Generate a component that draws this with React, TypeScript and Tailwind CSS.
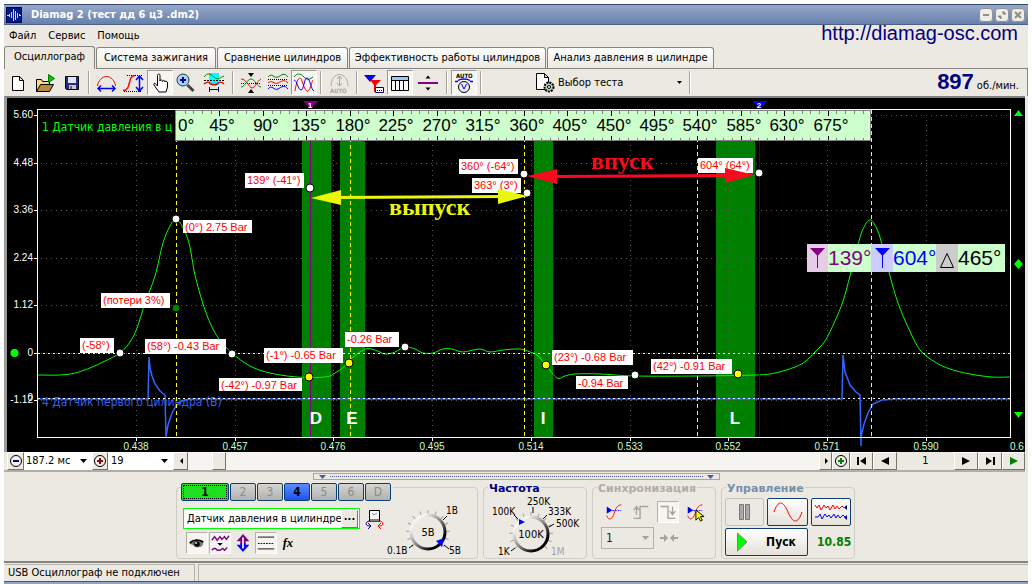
import type { ReactNode } from "react";

const channels = ["2", "3", "4", "5", "6", "D"];
const tabs = [
  { label: "Система зажигания", width: "w-[120px]" },
  { label: "Сравнение цилиндров", width: "w-[131px]" },
  { label: "Эффективность работы цилиндров", width: "w-[197px]" },
  { label: "Анализ давления в цилиндре", width: "w-[167px]" },
];

// Chart geometry
const gridY = [
  { y: 115, label: "5.60" },
  { y: 163, label: "4.48" },
  { y: 210, label: "3.36" },
  { y: 258, label: "2.24" },
  { y: 305, label: "1.12" },
  { y: 353, label: "0" },
  { y: 400, label: "-1.12" },
];
const gridX = [
  { x: 136, label: "0.438" },
  { x: 235, label: "0.457" },
  { x: 333, label: "0.476" },
  { x: 432, label: "0.495" },
  { x: 531, label: "0.514" },
  { x: 630, label: "0.533" },
  { x: 728, label: "0.552" },
  { x: 827, label: "0.571" },
  { x: 926, label: "0.590" },
];
const bands = [
  { x: 302, width: 29, label: "D", labelX: 316 },
  { x: 340, width: 25, label: "E", labelX: 352 },
  { x: 534, width: 19, label: "I", labelX: 543 },
  { x: 716, width: 39, label: "L", labelX: 735 },
];
const notes = [
  { x: 245, y: 173, w: 59, h: 15, text: "139° (-41°)" },
  { x: 459, y: 159, w: 59, h: 15, text: "360° (-64°)" },
  { x: 472, y: 178, w: 49, h: 15, text: "363° (3°)" },
  { x: 698, y: 158, w: 55, h: 15, text: "604° (64°)" },
  { x: 183, y: 220, w: 69, h: 13, text: "(0°) 2.75 Bar" },
  { x: 101, y: 293, w: 69, h: 15, text: "(потери 3%)" },
  { x: 80, y: 338, w: 34, h: 15, text: "(-58°)" },
  { x: 145, y: 339, w: 81, h: 15, text: "(58°) -0.43 Bar" },
  { x: 264, y: 348, w: 79, h: 15, text: "(-1°) -0.65 Bar" },
  { x: 219, y: 378, w: 83, h: 13, text: "(-42°) -0.97 Bar" },
  { x: 345, y: 332, w: 54, h: 15, text: "-0.26 Bar" },
  { x: 552, y: 350, w: 81, h: 15, text: "(23°) -0.68 Bar" },
  { x: 576, y: 376, w: 52, h: 13, text: "-0.94 Bar" },
  { x: 651, y: 359, w: 81, h: 15, text: "(42°) -0.91 Bar" },
];
const dots = [
  { x: 176, y: 219, fill: "#fff" },
  { x: 310, y: 188, fill: "#fff" },
  { x: 524, y: 174, fill: "#fff" },
  { x: 527, y: 193, fill: "#fff" },
  { x: 759, y: 173, fill: "#fff" },
  { x: 120, y: 353, fill: "#fff" },
  { x: 232, y: 354, fill: "#fff" },
  { x: 405, y: 347, fill: "#fff" },
  { x: 635, y: 375, fill: "#fff" },
  { x: 176, y: 308, fill: "#008000" },
  { x: 309, y: 377, fill: "#ff0" },
  { x: 349, y: 363, fill: "#ff0" },
  { x: 546, y: 365, fill: "#ff0" },
  { x: 738, y: 374, fill: "#ff0" },
];
const pressure =
  "38,375 60,375 75,373 90,368 105,361 120,353 130,342 137,328 145,303 155,276 163,243 170,226 176,219 182,226 189,243 195,275 203,304 211,325 219,339 232,353 250,366 270,373 297,377 325,377 335,373 345,366 352,358 365,349 375,350 385,354 395,352 405,347 415,349 423,353 433,353 443,349 452,349 463,352 479,349 490,352 503,350 520,349 530,352 537,355 546,365 557,378 565,376 575,374 600,374 635,376 697,376 756,375 775,373 795,367 806,361 815,352 825,341 835,321 843,301 850,276 857,248 863,229 870,220 877,229 883,248 890,276 898,303 908,327 920,350 935,362 950,369 970,374 992,377 1010,377";
const ignition =
  "38,399 148,399 149,357 150,368 152,376 155,384 160,391 165,395 166,437 168,425 172,413 176,406 182,401 190,399 842,399 843,355 845,372 850,385 856,392 860,395 861,446 861,437 864,424 868,413 873,404 882,400 895,399 1010,399";

// Catmull-Rom spline through a point list
function smoothPath(points: string) {
  const p = points.split(" ").map((pair) => pair.split(",").map(Number));
  let d = `M${p[0][0]} ${p[0][1]}`;
  for (let i = 0; i < p.length - 1; i++) {
    const a = p[i - 1] ?? p[i];
    const b = p[i];
    const c = p[i + 1];
    const e = p[i + 2] ?? c;
    d += `C${b[0] + (c[0] - a[0]) / 6} ${b[1] + (c[1] - a[1]) / 6} ${c[0] - (e[0] - b[0]) / 6} ${c[1] - (e[1] - b[1]) / 6} ${c[0]} ${c[1]}`;
  }
  return d;
}

export default function App() {
  return (
    <div className="min-h-screen bg-white px-1 pt-1 font-['DejaVu_Sans_Condensed','DejaVu_Sans',sans-serif] text-[11px] leading-4 text-black">
      <div className="bg-[#ece9e2]">
        <TitleBar />
        <MenuBar />
        <TabBar />
        <Toolbar />
        <div className="mr-[3px] border-t-2 border-l-[3px] border-t-[#808080] border-l-[#9a9a98] bg-black">
          <Chart />
        </div>
        <Transport />
        <div className="mx-auto mt-px flex h-[7px] w-[407px] items-center justify-between border border-[#aaa79f] px-[5px]">
          <Caret className="h-[4px] w-[7px] text-[#49628f]" />
          <span className="mx-1 grow border-t border-dotted border-[#49628f]" />
          <Caret className="h-[4px] w-[7px] text-[#49628f]" />
        </div>
        <div className="flex justify-center gap-[5px] pt-[7px] pr-px pb-[2px]">
          <ChannelGroup />
          <FrequencyGroup />
          <SyncGroup />
          <ControlGroup />
        </div>
        <footer className="flex gap-[3px] border-t-2 border-[#85837e] pt-px pl-px">
          <div className="w-[190px] border-t border-r border-[#b5b2aa] px-[3px]">USB Осциллограф не подключен</div>
          <div className="grow border-t border-l border-[#b5b2aa]" />
        </footer>
      </div>
      <div className="h-[5px] border-t border-[#41557f] bg-[#93a3c6]" />
    </div>
  );
}

function TitleBar() {
  return (
    <header className="flex h-[21px] items-center border-t border-b border-t-[#34466f] border-b-[#4b5f87] bg-linear-to-b from-[#97a8ca] to-[#6881ab] pr-[3px] pl-[2px] text-white">
      <svg viewBox="0 0 16 16" className="size-4">
        <rect width="16" height="16" fill="#001a8c" />
        <rect x="0.500" y="0.500" width="15" height="15" fill="none" stroke="#000a4a" />
        <path d="M1 8.500h2.500M3.500 7v3M5.500 5v6M7.500 2v12M9.500 4v9M11.500 6v5M13.500 7v2M13 8.500h2" fill="none" stroke="#b9e4ff" />
      </svg>
      <h1 className="ml-[9px] grow text-[11px] font-bold">Diamag 2 (тест дд 6 ц3 .dm2)</h1>
      <div className="flex gap-[2px]">
        <WindowButton label="Свернуть"><path d="M4 7h6" strokeWidth="2" /></WindowButton>
        <WindowButton label="Восстановить"><path d="M3 8h3v3zM11 6H8V3z" fill="#77756b" /></WindowButton>
        <WindowButton label="Закрыть"><path d="M4 4l6 6M10 4l-6 6" strokeWidth="2" /></WindowButton>
      </div>
    </header>
  );
}

function WindowButton({ label, children }: { label: string; children: ReactNode }) {
  return (
    <button type="button" aria-label={label} className="size-[14px] rounded-[4px] bg-[#efede5] ring-1 ring-[#8b9099] ring-inset">
      <svg viewBox="0 0 14 14" className="size-[14px]" fill="none" stroke="#918f84">{children}</svg>
    </button>
  );
}

function MenuBar() {
  return (
    <nav className="flex h-[21px] items-center gap-[12px] pr-[10px] pl-[5px]">
      <button type="button">Файл</button>
      <button type="button">Сервис</button>
      <button type="button">Помощь</button>
      <a href="http://diamag-osc.com" className="ml-auto self-start font-['Liberation_Sans',sans-serif] text-[20px] leading-4 text-[#000080]">http://diamag-osc.com</a>
    </nav>
  );
}

function TabBar() {
  return (
    <div role="tablist" className="flex h-[23px] items-end gap-px">
      <button role="tab" aria-selected="true" type="button" className="h-[23px] w-[91px] rounded-t-[3px] border-t border-r border-l border-[#85847f] pb-[3px]">Осциллограф</button>
      <div className="flex h-[22px] grow gap-px border-b border-[#85847f]">
        {tabs.map((tab) => (
          <button key={tab.label} role="tab" aria-selected="false" type="button" className={`${tab.width} rounded-t-[3px] border-t border-r border-l border-[#85847f] bg-linear-to-b from-white to-[#ece9e2] whitespace-nowrap`}>
            {tab.label}
          </button>
        ))}
      </div>
    </div>
  );
}

function Tool({ label, pressed, disabled, width = "w-[26px]", children }: { label: string; pressed?: boolean; disabled?: boolean; width?: string; children: ReactNode }) {
  return (
    <button
      type="button"
      aria-label={label}
      disabled={disabled}
      className={`${width} flex h-[25px] shrink-0 items-center justify-center border ${pressed ? "border-t-[#9a9892] border-r-white border-b-white border-l-[#9a9892] bg-[#f6f5f1]" : "border-transparent"}`}
    >
      <svg viewBox="0 0 22 22" className="size-[22px] shrink-0" fill="none" stroke="#000">{children}</svg>
    </button>
  );
}

function Separator() {
  return <span className="mx-[3px] h-[23px] w-[2px] shrink-0 border-r border-l border-r-white border-l-[#a5a29a]" />;
}

function Toolbar() {
  return (
    <div className="flex h-[27px] items-center border-r border-[#85847f] pl-[1px]">
      <Tool label="Новый"><path d="M5.500 4.500h7l4 4v10h-11zM12.500 4.500v4h4" fill="#fff" /></Tool>
      <Tool label="Открыть" width="w-[28px]">
        <path d="M2.500 19.500v-12h5l1 2h7v4" fill="#ffd58a" />
        <path d="M2.500 19.500l4-7h13l-4 7z" fill="#b98a3c" />
        <path d="M14.500 2.500l6 4-6 4z" fill="#0c0" stroke="#070" />
      </Tool>
      <Tool label="Сохранить">
        <path d="M4.500 4.500h13v13h-12l-1-1z" fill="#2a2a7c" />
        <path d="M7 5h8v6H7z" fill="#dce6f4" stroke="none" />
        <path d="M8 13h7v4H8z" fill="#c9c9c9" stroke="none" />
        <path d="M10 14v3" />
      </Tool>
      <Separator />
      <Tool label="Сжать по времени">
        <path d="M2.500 14C3 9 7 4.500 11.500 4.500S20 9 20.500 14" stroke="#f00" />
        <path d="M3 16.500h17M6 13.500l-3 3 3 3M17 13.500l3 3-3 3" stroke="#00f" strokeWidth="1.500" />
      </Tool>
      <Tool label="Масштаб по амплитуде" width="w-[28px]">
        <path d="M5 3.500h15M2 19.500h18" strokeDasharray="1 1" />
        <path d="M1 18.500c9 0 4-15 12-15" stroke="#f00" strokeWidth="1.500" />
        <path d="M17.500 5v13M14 8l3.500-4L21 8M14 15l3.500 4 3.500-4" stroke="#00f" strokeWidth="1.500" />
      </Tool>
      <Tool label="Рука" pressed>
        <path d="M8.500 14V3.500c0-2 2.500-2 2.500 0V9c0-1.500 2.500-1.500 2.500.5 0-1.500 2.500-1.500 2.500.5 0-1.500 2.500-1 2.500 1v4l-1.500 5H10l-5-7c-1-2 1.500-2.500 3 .5z" fill="#fff" />
      </Tool>
      <Tool label="Лупа">
        <circle cx="8" cy="8" r="6" fill="#9cd7ff" stroke="#334" />
        <path d="M8 5v6M5 8h6" stroke="#00008b" strokeWidth="2" />
        <path d="M12.500 13l6 6" stroke="#444" strokeWidth="3" />
      </Tool>
      <Tool label="Диапазон" width="w-[30px]">
        <path d="M6 1h10v12H6z" fill="#00ffff" stroke="none" />
        <path d="M1 5c3-4 6-4 10 0s7 0 10-1" stroke="#008000" />
        <path d="M1 8.500h20" strokeDasharray="2 1" />
        <path d="M1 12c5-4 5-1 7 0s4 1 6 0 3-4 7 0" stroke="#f00" strokeWidth="1.500" />
        <path d="M6 17.500h10M6.500 15v5M15.500 15v5" stroke="#00008b" />
      </Tool>
      <Separator />
      <Tool label="Наложить сигналы" width="w-[28px]">
        <path d="M8 1h6l-3 4zM8 21h6l-3-4z" fill="#000" stroke="none" />
        <path d="M1 11.500h20" strokeDasharray="1 1" />
        <path d="M1 7c6 0 8 9 11 9s5-7 9-9" stroke="#f00" />
        <path d="M1 15c4 0 6-8 10-8s6 8 10 8" stroke="#008000" />
      </Tool>
      <Tool label="Разнести сигналы">
        <path d="M1 5c4-5 6 2 10 0s6-5 10 0" stroke="#008000" />
        <path d="M1 11c4-4 6 2 10 0s6-4 10 0" stroke="#f00" />
        <path d="M1 17c4-5 6 2 10 0s6-5 10 0" stroke="#00f" />
        <path d="M1 7.500h20M1 13.500h20" strokeDasharray="1 1" />
      </Tool>
      <Tool label="Исходное положение" pressed>
        <path d="M1 5c3-4 6-4 10 0s6 2 9 0" stroke="#008000" />
        <path d="M2 19C4 6 7 3 9 9s5 15 8 7 2-7 3-8" stroke="#f00" />
        <path d="M1 8c3 0 4 10 7 10s3-12 6-12 4 12 7 13" stroke="#00f" />
      </Tool>
      <Separator />
      <Tool label="Автомасштаб" disabled width="w-[28px]">
        <path d="M3 14C3 7 7 2.500 11.500 2.500S20 7 20 14M11.500 4v10M9 7l2.500-3L14 7M9 11l2.500 3 2.500-3" stroke="#aaa79f" />
        <text x="2" y="21" fontSize="6" fontWeight="bold" fill="#aaa79f" stroke="none">AUTO</text>
      </Tool>
      <Separator />
      <Tool label="Маркеры">
        <path d="M1 3h12l-6 7z" fill="#00f" stroke="none" />
        <path d="M7 8h11l-5 5v7h-2v-7z" fill="#f00" stroke="none" />
        <path d="M12.500 15.500h8v5h-8z" fill="#fff" stroke="#006" />
        <path d="M14 18.500h5" stroke="#006" strokeDasharray="1 1" />
      </Tool>
      <Tool label="Таблица" pressed>
        <path d="M2.500 4.500h17v14h-17z" fill="#fff" />
        <path d="M3 5h16v3H3z" fill="#9cc8f8" stroke="none" />
        <path d="M3 8.500h16M6.500 8v10M10.500 8v10M14.500 8v10" />
      </Tool>
      <Tool label="Разделить" width="w-[30px]">
        <path d="M8.500 6.500h5l-2.500-3zM8.500 15.500h5l-2.500 3z" fill="#000" stroke="none" />
        <path d="M1 11h20" stroke="#800080" strokeWidth="2" />
      </Tool>
      <Separator />
      <Tool label="Авто" pressed>
        <text x="3" y="6" fontSize="6" fontWeight="bold" fill="#000" stroke="none">AUTO</text>
        <path d="M2 9.500h3M5 8.500c3-2 9-2 12 0M17 9.500h3" stroke="#00f" strokeWidth="1.500" />
        <circle cx="11" cy="15" r="5.500" fill="#e9e9e9" />
        <path d="M8.500 12l2.500 5 2.500-5" stroke="#00f" />
      </Tool>
      <Separator />
      <label className="ml-[49px] flex items-center">
        <svg viewBox="0 0 22 22" className="size-[22px]" fill="none" stroke="#000">
          <path d="M2.500 1.500h8l4 4v12h-12zM10.500 1.500v4h4" fill="#fff" />
          <circle cx="15" cy="15" r="4.500" fill="#b9cbb9" strokeWidth="2" strokeDasharray="2 1" />
          <circle cx="15" cy="15" r="1.500" fill="#fff" />
        </svg>
        <span className="relative ml-[2px] flex items-center">
          <select aria-label="Выбор теста" className="w-[128px] appearance-none bg-transparent">
            <option>Выбор теста</option>
          </select>
          <Caret className="absolute right-[4px] h-[3px] w-[5px]" />
        </span>
      </label>
      <Separator />
      <div className="mr-[8px] ml-auto flex items-baseline gap-[3px] pt-[3px]">
        <strong className="font-['Liberation_Sans',sans-serif] text-[22px] text-[#000080]">897</strong>
        <span className="text-[11px]">об./мин.</span>
      </div>
    </div>
  );
}

function Caret({ className }: { className: string }) {
  return (
    <svg viewBox="0 0 7 4" className={`pointer-events-none ${className}`} fill="currentColor"><path d="M0 0h7L3.500 4z" /></svg>
  );
}

function Chart() {
  return (
    <svg viewBox="7 98 1018 354" className="block w-full font-['Liberation_Sans',sans-serif]" fill="none">
      <g shapeRendering="crispEdges">
        {bands.map((band) => <rect key={band.label} x={band.x} y="141" width={band.width} height="296" fill="#008000" />)}
        {gridY.map((line) => (
          <g key={line.label}>
            <path d={`M41 ${line.y}.5H1010`} stroke="#555" strokeDasharray="1 4" />
            <path d={`M34 ${line.y}.5h4`} stroke="#fff" />
          </g>
        ))}
        {gridX.map((line) => (
          <g key={line.label}>
            <path d={`M${line.x}.5 115V437`} stroke="#555" strokeDasharray="1 4" />
            <path d={`M${line.x}.5 438v3`} stroke="#fff" />
          </g>
        ))}
      </g>
      <text x="42" y="131" fontSize="12" fill="#0f0" className="font-['DejaVu_Sans_Condensed','DejaVu_Sans',sans-serif]">1 Датчик давления в ц</text>
      <text x="42" y="406" fontSize="12" fill="#3060f0" className="font-['DejaVu_Sans_Condensed','DejaVu_Sans',sans-serif]">4 Датчик первого цилиндра (В)</text>
      <polyline points={ignition} stroke="#3366ff" strokeWidth="1.500" />
      <path d={smoothPath(pressure)} stroke="#0f0" />
      <g shapeRendering="crispEdges">
        <path d="M38 353.500H1010M38 398.500H1010" stroke="#fff" strokeDasharray="2 3" />
        {[176, 350, 524, 697, 871].map((x) => <path key={x} d={`M${x}.5 110V437`} stroke="#ff0" strokeDasharray="4 3" />)}
        <path d="M310.500 109V437" stroke="#800080" />
        <path d="M759.500 109V437" stroke="#0000ff" />
        <path d="M37.500 109.500H1010.500V437.500H37.500z" stroke="#fff" />
        <Ruler />
      </g>
      {gridY.map((line) => <text key={line.label} x="33" y={line.y + 3} fontSize="10" textAnchor="end" fill="#fff">{line.label}</text>)}
      <text x="33" y="401" fontSize="10" textAnchor="end" fill="#fff">0</text>
      {gridX.map((line) => <text key={line.label} x={line.x} y="450" fontSize="10" textAnchor="middle" fill="#cfc">{line.label}</text>)}
      <text x="1010" y="450" fontSize="10" fill="#cfc">0.6</text>
      {bands.map((band) => <text key={band.label} x={band.labelX} y="424" fontSize="17" fontWeight="bold" textAnchor="middle" fill="#fff">{band.label}</text>)}

      <path d="M303 101h15l-7 8z" fill="#800080" />
      <path d="M752 101h15l-7 8z" fill="#0000ff" />
      <text x="310" y="108" fontSize="8" fontWeight="bold" textAnchor="middle" fill="#fff">1</text>
      <text x="759" y="108" fontSize="8" fontWeight="bold" textAnchor="middle" fill="#fff">2</text>

      {notes.map((note) => (
        <g key={note.text}>
          <rect x={note.x} y={note.y} width={note.w} height={note.h} fill="#fff" />
          <text x={note.x + 2} y={note.y + 11} fontSize="11" fill="#f00">{note.text}</text>
        </g>
      ))}
      {dots.map((dot) => <circle key={`${dot.x}-${dot.y}`} cx={dot.x} cy={dot.y} r="4" fill={dot.fill} stroke="#000" />)}

      <path d="M335 197.500L505 196.500" stroke="#eaf70a" strokeWidth="3" />
      <path d="M311 198l30-8v15zM528 196l-30-7v15z" fill="#eaf70a" />
      <path d="M550 176.500L730 175.500" stroke="#fa0a1e" strokeWidth="3" />
      <path d="M527 176l30-7v15zM755 175l-30-7v15z" fill="#fa0a1e" />
      <g fontSize="24" fontWeight="bold" className="font-['Liberation_Serif',serif]">
        <text x="389" y="215" fill="#eaf70a">выпуск</text>
        <text x="591" y="169" fill="#fa0a1e">впуск</text>
      </g>

      <Readout />
      <circle cx="14.500" cy="353" r="4" fill="#0f0" />
      <path d="M1014 116l4.500-6 4.500 6zM1014 264l4.500-5 4.500 5-4.500 5zM1014 412h9l-4.500 6z" fill="#0f0" />
    </svg>
  );
}

function Ruler() {
  const ticks = Array.from({ length: 79 }, (_, i) => i + 1);
  return (
    <g>
      <rect x="175.500" y="110.500" width="695" height="30" fill="#cfc" stroke="#808080" />
      {ticks.map((i) => {
        const x = Math.round(176 + i * 8.69);
        const major = i % 5 === 0;
        return <path key={i} d={major ? `M${x}.5 111v5M${x}.5 136v4` : `M${x}.5 111v3M${x}.5 138v2`} stroke={major ? "#000" : "#808080"} />;
      })}
      <text x="178" y="131" fontSize="17" fill="#000">0°</text>
      {Array.from({ length: 15 }, (_, i) => (
        <text key={i} x={Math.round(179 + (i + 1) * 43.45)} y="131" fontSize="17" textAnchor="middle" fill="#000">{(i + 1) * 45}°</text>
      ))}
    </g>
  );
}

function Readout() {
  return (
    <g fontSize="21">
      <rect x="807" y="244" width="198" height="28" fill="#cfc" />
      <rect x="807" y="244" width="21" height="28" fill="#e6cce6" />
      <rect x="871" y="244" width="22" height="28" fill="#ccf" />
      <rect x="936" y="244" width="22" height="28" fill="#ccc" />
      <path d="M810 248h15l-7.500 8z" fill="#800080" />
      <path d="M817.500 254v14" stroke="#800080" />
      <path d="M875 248h15l-7.500 8z" fill="#00f" />
      <path d="M882.500 254v14" stroke="#00f" />
      <path d="M940.500 267.500h13l-6.500-14z" stroke="#000" />
      <text x="828" y="265" fill="#800080">139°</text>
      <text x="893" y="265" fill="#00f">604°</text>
      <text x="958" y="265" fill="#000">465°</text>
    </g>
  );
}

const raised = "flex h-[18px] items-center justify-center border border-t-white border-r-[#77756f] border-b-[#77756f] border-l-white bg-[#ece9e2]";

function StepButton({ label, width, green, children }: { label: string; width: string; green?: boolean; children: ReactNode }) {
  return (
    <button type="button" aria-label={label} className={`${raised} ${width} ${green ? "text-[#008000]" : "text-black"} shrink-0`}>
      <svg viewBox="0 0 16 16" className="size-4 shrink-0" fill="currentColor">{children}</svg>
    </button>
  );
}

function Transport() {
  return (
    <div className="mr-[3px] flex h-[20px] items-start border-b-2 border-[#b1aea6] pl-[3px] text-[11px]">
      <StepButton label="Сжать" width="w-[17px]">
        <circle cx="8" cy="8" r="5.500" fill="#f4f2ec" stroke="#000" />
        <path d="M5 7h6v2H5z" fill="#000080" />
      </StepButton>
      <span className="relative flex items-center">
        <select aria-label="Развёртка" className="h-[18px] w-[68px] appearance-none bg-white pl-[2px] leading-4">
          <option>187.2 мс</option>
        </select>
        <Caret className="absolute right-[5px] h-[4px] w-[7px]" />
      </span>
      <StepButton label="Растянуть" width="w-[16px]">
        <circle cx="8" cy="8" r="5.500" fill="#f4f2ec" stroke="#000" />
        <path d="M5 7h2V5h2v2h2v2H9v2H7V9H5z" fill="#900" />
      </StepButton>
      <span className="relative flex items-center">
        <select aria-label="Шаг" className="h-[18px] w-[65px] appearance-none bg-white pl-[3px] leading-4">
          <option>19</option>
        </select>
        <Caret className="absolute right-[5px] h-[4px] w-[7px]" />
      </span>
      <StepButton label="Прокрутить влево" width="w-[15px]"><path d="M10 5v6L7 8z" /></StepButton>
      <div className="h-[18px] grow bg-[#f5f4f0] pl-6"><div className={`${raised} w-[14px]`} /></div>
      <StepButton label="Прокрутить вправо" width="w-[13px]"><path d="M7 5v6l3-3z" /></StepButton>
      <StepButton label="Добавить" width="w-[18px]">
        <circle cx="8" cy="8" r="5.500" fill="#f4f2ec" stroke="#000" />
        <path d="M5 7h2V5h2v2h2v2H9v2H7V9H5z" fill="#008000" />
      </StepButton>
      <StepButton label="В начало" width="w-[23px]"><path d="M3 4h2v8H3zM12 4v8L6 8z" /></StepButton>
      <StepButton label="Назад" width="w-[24px]"><path d="M12 4v8L4 8z" /></StepButton>
      <output className="w-[57px] text-center leading-[18px]">1</output>
      <StepButton label="Вперёд" width="w-[24px]"><path d="M4 4v8l8-4z" /></StepButton>
      <StepButton label="В конец" width="w-[24px]"><path d="M11 4h2v8h-2zM4 4v8l6-4z" /></StepButton>
      <StepButton label="Пуск" width="w-[23px]" green><path d="M4 4v8l8-4z" /></StepButton>
    </div>
  );
}

function Group({ title, titleColor, width, children }: { title: string; titleColor: string; width: string; children: ReactNode }) {
  return (
    <section className={`${width} h-[72px] rounded-[4px] border border-[#cfccc4]`}>
      <h2 className={`${titleColor} -mt-[7px] ml-[4px] w-fit bg-[#ece9e2] px-px font-['DejaVu_Sans',sans-serif] text-[11px] leading-4 font-bold`}>{title}</h2>
      {children}
    </section>
  );
}

function ChannelGroup() {
  return (
    <section className="flex h-[72px] w-[302px] rounded-[4px] border border-[#cfccc4]">
      <div className="w-[209px] shrink-0 pl-[4px]">
        <div className="-mt-[5px] flex w-[212px] gap-px bg-[#ece9e2]">
          <button type="button" className="h-[18px] w-[48px] rounded-[2px] border border-[#0b3f73] bg-[#1fe01f] p-px font-bold">
            <span className="block h-[14px] border border-dotted border-black text-[12px] leading-3">1</span>
          </button>
          {channels.map((channel) => (
            <button
              key={channel}
              type="button"
              className={`h-[18px] w-[26px] rounded-[2px] border border-[#0b3f73] text-[12px] leading-4 ${channel === "4" ? "bg-linear-to-b from-[#5b8cff] to-[#1f50f0] font-bold" : "bg-linear-to-b from-[#d4d4d2] to-[#b2b2b0] text-[#8b8b88]"}`}
            >
              {channel}
            </button>
          ))}
        </div>
        <div className="mt-[7px] ml-[2px] flex items-center gap-[5px]">
          <div className="flex h-[21px] w-[177px] items-center border border-[#0f0] bg-white pr-px">
            <input aria-label="Название канала" defaultValue="Датчик давления в цилиндре" className="w-[157px] bg-transparent pl-[3px] text-[11px] outline-none" />
            <button type="button" aria-label="Выбрать датчик" className={`${raised} w-[17px] pb-1 font-bold`}>...</button>
          </div>
          <button type="button" aria-label="Перевернуть" className="shrink-0">
            <svg viewBox="0 0 20 20" className="size-5" fill="none">
              <path d="M4.500 1.500h10v11h-10z" fill="#fff" stroke="#000" />
              <path d="M7 4l2 2 3-2" stroke="#888" />
              <path d="M5 10h9v2H5z" fill="#808080" />
              <path d="M5 12.500h9" stroke="#008000" />
              <path d="M4 12c-4 1-4 5 1 5M3 14l3 3-3 3" stroke="#000080" />
              <path d="M15 12c4 1 4 5-1 5M16 14l-3 3 3 3" stroke="#f00" />
            </svg>
          </button>
        </div>
        <div className="mt-[3px] ml-[5px] flex items-center gap-[1px]">
          <SmallTool label="Показать" pressed>
            <path d="M3 12c2-5 10-6 15-2l-1 4c-4 3-9 2-11-1z" fill="#777" />
            <path d="M3 11c4-4 10-4 15-1" stroke="#000" strokeWidth="2" />
            <circle cx="11" cy="12" r="3" fill="#000" />
            <circle cx="10" cy="11" r="1" fill="#fff" />
          </SmallTool>
          <SmallTool label="Фильтр" pressed>
            <path d="M2 8l3-4 3 4 3-4 2 3 3-3 2 3 3-4M2 19l2-2h2l2 2h3l3-2 2 2 3-3" stroke="#800080" strokeWidth="1.500" />
            <path d="M8 11h6l-3 3z" fill="#000" />
          </SmallTool>
          <SmallTool label="Сдвиг">
            <path d="M11 1l7 8h-4v2H8V9H4z" fill="#800080" />
            <path d="M11 21l7-8h-4v-2H8v2H4z" fill="#00f" />
            <path d="M11 5v12" stroke="#ece9e2" strokeWidth="2" />
          </SmallTool>
          <SmallTool label="Линии" pressed>
            <path d="M2 4.500h18M2 17.500h18" stroke="#000" />
            <path d="M2 11.500h18" stroke="#000" strokeDasharray="2 1" />
          </SmallTool>
          <SmallTool label="Функция">
            <text x="4" y="15" fontSize="14" fontStyle="italic" fontWeight="bold" fill="#000" className="font-['Liberation_Serif',serif]">fx</text>
          </SmallTool>
        </div>
      </div>
      <svg viewBox="386 488 86 68" className="h-[68px] w-[86px] shrink-0 text-[10px]" fill="none">
        <Knob cx={428} cy={532} value="5В" />
        <path d="M436 541l8-3-2 9z" fill="#00f" />
        <path d="M443 520l4-4M444 545l5 4M413 545l-4 3" stroke="#000" />
        <text x="446" y="514" fill="#000">1В</text>
        <text x="449" y="554" fill="#000">5В</text>
        <text x="387" y="554" fill="#000">0.1В</text>
      </svg>
    </section>
  );
}

function SmallTool({ label, pressed, children }: { label: string; pressed?: boolean; children: ReactNode }) {
  return (
    <button type="button" aria-label={label} className={`flex h-[22px] w-[22px] shrink-0 items-center justify-center border ${pressed ? "border-t-[#b4b1a9] border-r-white border-b-white border-l-[#b4b1a9] bg-[#f6f5f1]" : "border-transparent"}`}>
      <svg viewBox="0 0 22 22" className="size-5 shrink-0" fill="none">{children}</svg>
    </button>
  );
}

function Knob({ cx, cy, value }: { cx: number; cy: number; value: string }) {
  const gradient = `knob-${cx}`;
  return (
    <g>
      <defs>
        <linearGradient id={gradient} x1="0" y1="0" x2="1" y2="1">
          <stop offset="0.200" stopColor="#f4f4f4" />
          <stop offset="0.500" stopColor="#888" />
          <stop offset="0.800" stopColor="#000" />
        </linearGradient>
      </defs>
      {Array.from({ length: 13 }, (_, i) => (
        <path key={i} d={`M${cx - 18} ${cy}h-4`} stroke="#a5a29a" transform={`rotate(${i * 22 - 42} ${cx} ${cy})`} />
      ))}
      <circle cx={cx} cy={cy} r="17" fill="#ece9e2" stroke={`url(#${gradient})`} strokeWidth="3" />
      <text x={cx} y={cy + 4} fontSize="11" textAnchor="middle" fill="#000">{value}</text>
    </g>
  );
}

function FrequencyGroup() {
  return (
    <Group title="Частота" titleColor="text-[#000080]" width="w-[104px]">
      <svg viewBox="485 496 102 62" className="h-[62px] w-[102px] text-[10px]" fill="none">
        <Knob cx={532} cy={533} value="100K" />
        <path d="M520 518l6 3-6 3z" fill="#00f" />
        <path d="M515 514l4 4M534 506v6M548 514l-4 4M555 523l-5 3M516 547l-4 3" stroke="#000" />
        <g fill="#000">
          <text x="528" y="504">250K</text>
          <text x="493" y="514">100K</text>
          <text x="549" y="514">333K</text>
          <text x="557" y="526">500K</text>
          <text x="499" y="554">1K</text>
          <text x="552" y="554" fill="#a5a29a">1M</text>
        </g>
      </svg>
    </Group>
  );
}

function SyncGroup() {
  return (
    <Group title="Синхронизация" titleColor="text-[#b0ada5]" width="w-[124px]">
      <div className="mt-[4px] flex items-center gap-[5px] pl-[10px]">
        <SmallTool label="Уровень">
          <path d="M3 15c2 6 6 4 8-2s3-9 8-10" stroke="#f00" />
          <path d="M3 5v8l6-4z" fill="#00f" />
          <path d="M9 9.500h10" stroke="#00f" strokeDasharray="2 1" />
        </SmallTool>
        <SmallTool label="Передний фронт">
          <path d="M3 18h7V5h9M6 14V6M3 9l3-4 3 4" stroke="#a5a29a" strokeWidth="1.500" />
        </SmallTool>
        <SmallTool label="Задний фронт" pressed>
          <path d="M3 5h8v13h8M16 5v8M13 10l3 4 3-4" stroke="#a5a29a" strokeWidth="1.500" />
        </SmallTool>
        <SmallTool label="Указать уровень">
          <path d="M3 15c2 6 6 4 8-2s3-9 8-10" stroke="#f00" />
          <path d="M3 5v8l6-4z" fill="#00f" />
          <path d="M9 9.500h10" stroke="#00f" strokeDasharray="2 1" />
          <path d="M12 9v11l3-3 2 4 2-1-2-4h4z" fill="#ff0" stroke="#000" />
        </SmallTool>
      </div>
      <div className="mt-[4px] flex items-center gap-[5px] pl-[8px]">
        <span className="relative flex items-center text-[#a5a29a]">
          <select aria-label="Канал синхронизации" disabled className="h-[22px] w-[53px] appearance-none border border-[#b4b1a9] bg-[#ece9e2] pl-[4px] text-[12px] leading-4 text-[#22211e] opacity-100">
            <option>1</option>
          </select>
          <Caret className="absolute right-[5px] h-[4px] w-[7px]" />
        </span>
        <button type="button" aria-label="Захват" disabled>
          <svg viewBox="0 0 20 10" className="h-[10px] w-5" fill="#a5a29a"><path d="M1 4h4V1l4 4-4 4V6H1zM19 4h-4V1l-4 4 4 4V6h4z" /></svg>
        </button>
      </div>
    </Group>
  );
}

function ControlGroup() {
  const button = "flex items-center justify-center rounded-[2px] border border-[#0b3f73] bg-linear-to-b from-white to-[#e4e1d9]";
  return (
    <Group title="Управление" titleColor="text-[#7690ac]" width="w-[134px]">
      <div className="mt-px flex gap-[3px] pl-[3px]">
        <button type="button" aria-label="Пауза" disabled className="flex h-[28px] w-[39px] items-center justify-center rounded-[2px] border border-[#c5c2ba]">
          <svg viewBox="0 0 12 16" className="h-4 w-3" fill="#aaa" stroke="#777"><path d="M.5.5h4v15h-4zM6.500.5h4v15h-4z" /></svg>
        </button>
        <button type="button" aria-label="Один кадр" className={`${button} h-[28px] w-[41px]`}>
          <svg viewBox="0 0 30 20" className="h-5 w-[30px]" fill="none" stroke="#f00"><path d="M1 10C5-2 10-2 15 10s10 12 14 0" /></svg>
        </button>
        <button type="button" aria-label="Запись" className={`${button} h-[28px] w-[40px]`}>
          <svg viewBox="0 0 34 20" className="h-5 w-[34px]" fill="none">
            <path d="M1 3l2 3 2-3 2 5 3-5 2 3 2-2 2 4 3-5 2 4 2-3 2 3 3-3 2 2" stroke="#f00" />
            <path d="M1 15h3l2-3 2 5 3-5 2 3 2-2 2 3 3-4 2 4 2-3 2 3 3-3 2 2" stroke="#00f" />
            <path d="M33 3v5l-3-2.500zM33 13v5l-3-2.500z" fill="#000080" />
          </svg>
        </button>
      </div>
      <div className="mt-[2px] flex items-center pl-[3px]">
        <button type="button" className={`${button} h-[28px] w-[83px] font-['DejaVu_Sans_Condensed','DejaVu_Sans',sans-serif] text-[12px] font-bold`}>
          <svg viewBox="0 0 11 20" className="mr-[18px] h-5 w-[11px]" fill="#0f0" stroke="#808080"><path d="M.5 1v18L10 10z" /></svg>
          Пуск
        </button>
        <output className="ml-[9px] font-['DejaVu_Sans_Condensed','DejaVu_Sans',sans-serif] text-[12px] font-bold text-[#008000]">10.85</output>
      </div>
    </Group>
  );
}
